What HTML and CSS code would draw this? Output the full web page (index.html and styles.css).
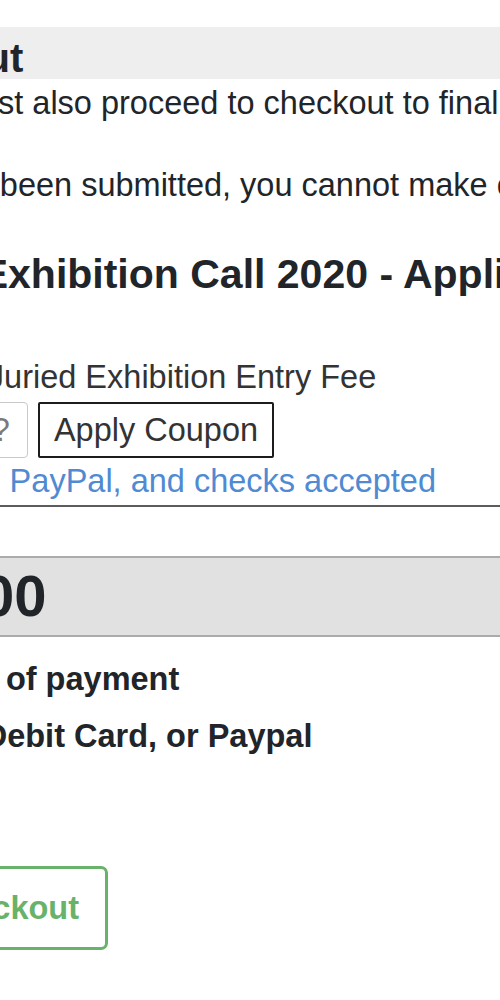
FILE: index.html
```html
<!DOCTYPE html>
<html lang="en">
<head>
<meta charset="utf-8">
<title>Checkout</title>
<link rel="stylesheet" href="styles.css">
</head>
<body>
<main class="page">
  <h1 class="band-title"><span class="cut cut-title">Checko</span>ut</h1>
  <p class="note note-first"><span class="cut cut-note1">Your entry is saved. You mu</span>st also proceed to checkout to finalize your submission.</p>
  <p class="note note-second"><span class="cut cut-note2">Once your application has</span> been submitted, you cannot make changes to it.</p>
  <h2 class="app-title"><span class="cut cut-app">Juried</span> Exhibition Call 2020 - Application</h2>
  <p class="item"><span class="cut cut-item">1 x</span> Juried Exhibition Entry Fee</p>
  <form class="coupon-row">
    <input class="coupon-input" type="text" placeholder="Have a coupon?">
    <button class="coupon-btn" type="button">Apply Coupon</button>
  </form>
  <p class="accepted"><span class="cut cut-accepted">Credit cards,</span> PayPal, and checks accepted</p>
  <hr class="rule">
  <div class="total"><span class="cut cut-total">Total: $25.</span>00</div>
  <p class="pay-label"><span class="cut cut-pay">Select method</span> of payment</p>
  <p class="pay-option"><span class="cut cut-option">Credit Card,</span> Debit Card, or Paypal</p>
  <div class="actions"><button class="checkout-btn" type="button">Checkout</button></div>
</main>
</body>
</html>
```

FILE: styles.css
```css
html, body {
  margin: 0;
  padding: 0;
  background: #ffffff;
  overflow: hidden;
}

body {
  font-family: "Liberation Sans", Arial, sans-serif;
  color: #212529;
  font-size: 32.5px;
}

/* the page column starts off-screen to the left; only its right part is seen */
.page {
  margin-left: -700px;
  width: 1500px;
}

.cut {
  display: inline-block;
  text-align: right;
  white-space: nowrap;
}

.cut-title { width: 685.5px; }
.cut-note1 { width: 698px; }
.cut-note2 { width: 690.8px; }
.cut-app { width: 669.3px; }
.cut-item { width: 678.8px; }
.cut-accepted { width: 700.6px; }
.cut-total { width: 682.1px; }
.cut-pay { width: 696.9px; }
.cut-option { width: 674.7px; }

.band-title {
  margin: 27px 0 0;
  box-sizing: border-box;
  height: 52px;
  padding-top: 11px;
  background: #eeeeee;
  font-size: 40px;
  line-height: 40px;
  font-weight: bold;
  white-space: nowrap;
}

.note {
  margin: 0;
  line-height: 48px;
  white-space: nowrap;
}

.note-second {
  margin-top: 34px;
}

.app-title {
  margin: 40px 0 0;
  font-size: 41px;
  line-height: 50px;
  font-weight: bold;
  white-space: nowrap;
}

.item {
  margin: 54px 0 0;
  line-height: 48px;
  color: #333333;
  white-space: nowrap;
}

.coupon-row {
  display: flex;
  gap: 10px;
  margin: 1px 0 0;
  padding-left: 460px;
}

.coupon-input {
  box-sizing: border-box;
  width: 268px;
  height: 56px;
  padding: 0 12px;
  border: 1px solid #c9c9c9;
  border-radius: 4px;
  font-family: "Liberation Sans", Arial, sans-serif;
  font-size: 32.5px;
  color: #333333;
  background: #ffffff;
}

.coupon-input::placeholder {
  color: #7a7a7a;
}

.coupon-btn {
  box-sizing: border-box;
  width: 236px;
  height: 56px;
  padding: 0;
  border: 2px solid #1c1c1c;
  border-radius: 2px;
  background: #ffffff;
  color: #333333;
  font-family: "Liberation Sans", Arial, sans-serif;
  font-size: 32.5px;
  line-height: 38px;
}

.accepted {
  margin: 3px 0 0;
  line-height: 40px;
  color: #4f8ad2;
  white-space: nowrap;
}

.rule {
  margin: 4px 0 0;
  height: 2px;
  border: 0;
  background: #5c5c5c;
}

.total {
  margin-top: 49px;
  padding: 3px 0 4px;
  border-top: 2px solid #ababab;
  border-bottom: 2px solid #ababab;
  background: #e1e1e1;
  font-size: 58px;
  line-height: 70px;
  font-weight: bold;
  white-space: nowrap;
}

.pay-label {
  margin: 18px 0 0;
  line-height: 48px;
  font-weight: bold;
  white-space: nowrap;
}

.pay-option {
  margin: 9px 0 0;
  line-height: 48px;
  font-weight: bold;
  white-space: nowrap;
}

.actions {
  width: 808px;
  margin-top: 106px;
  display: flex;
  justify-content: flex-end;
}

.checkout-btn {
  box-sizing: border-box;
  height: 84px;
  padding: 0 26px;
  border: 3px solid #69b26a;
  border-radius: 7px;
  background: #ffffff;
  color: #69b26a;
  font-family: "Liberation Sans", Arial, sans-serif;
  font-size: 32.5px;
  font-weight: bold;
  line-height: 78px;
}
```
